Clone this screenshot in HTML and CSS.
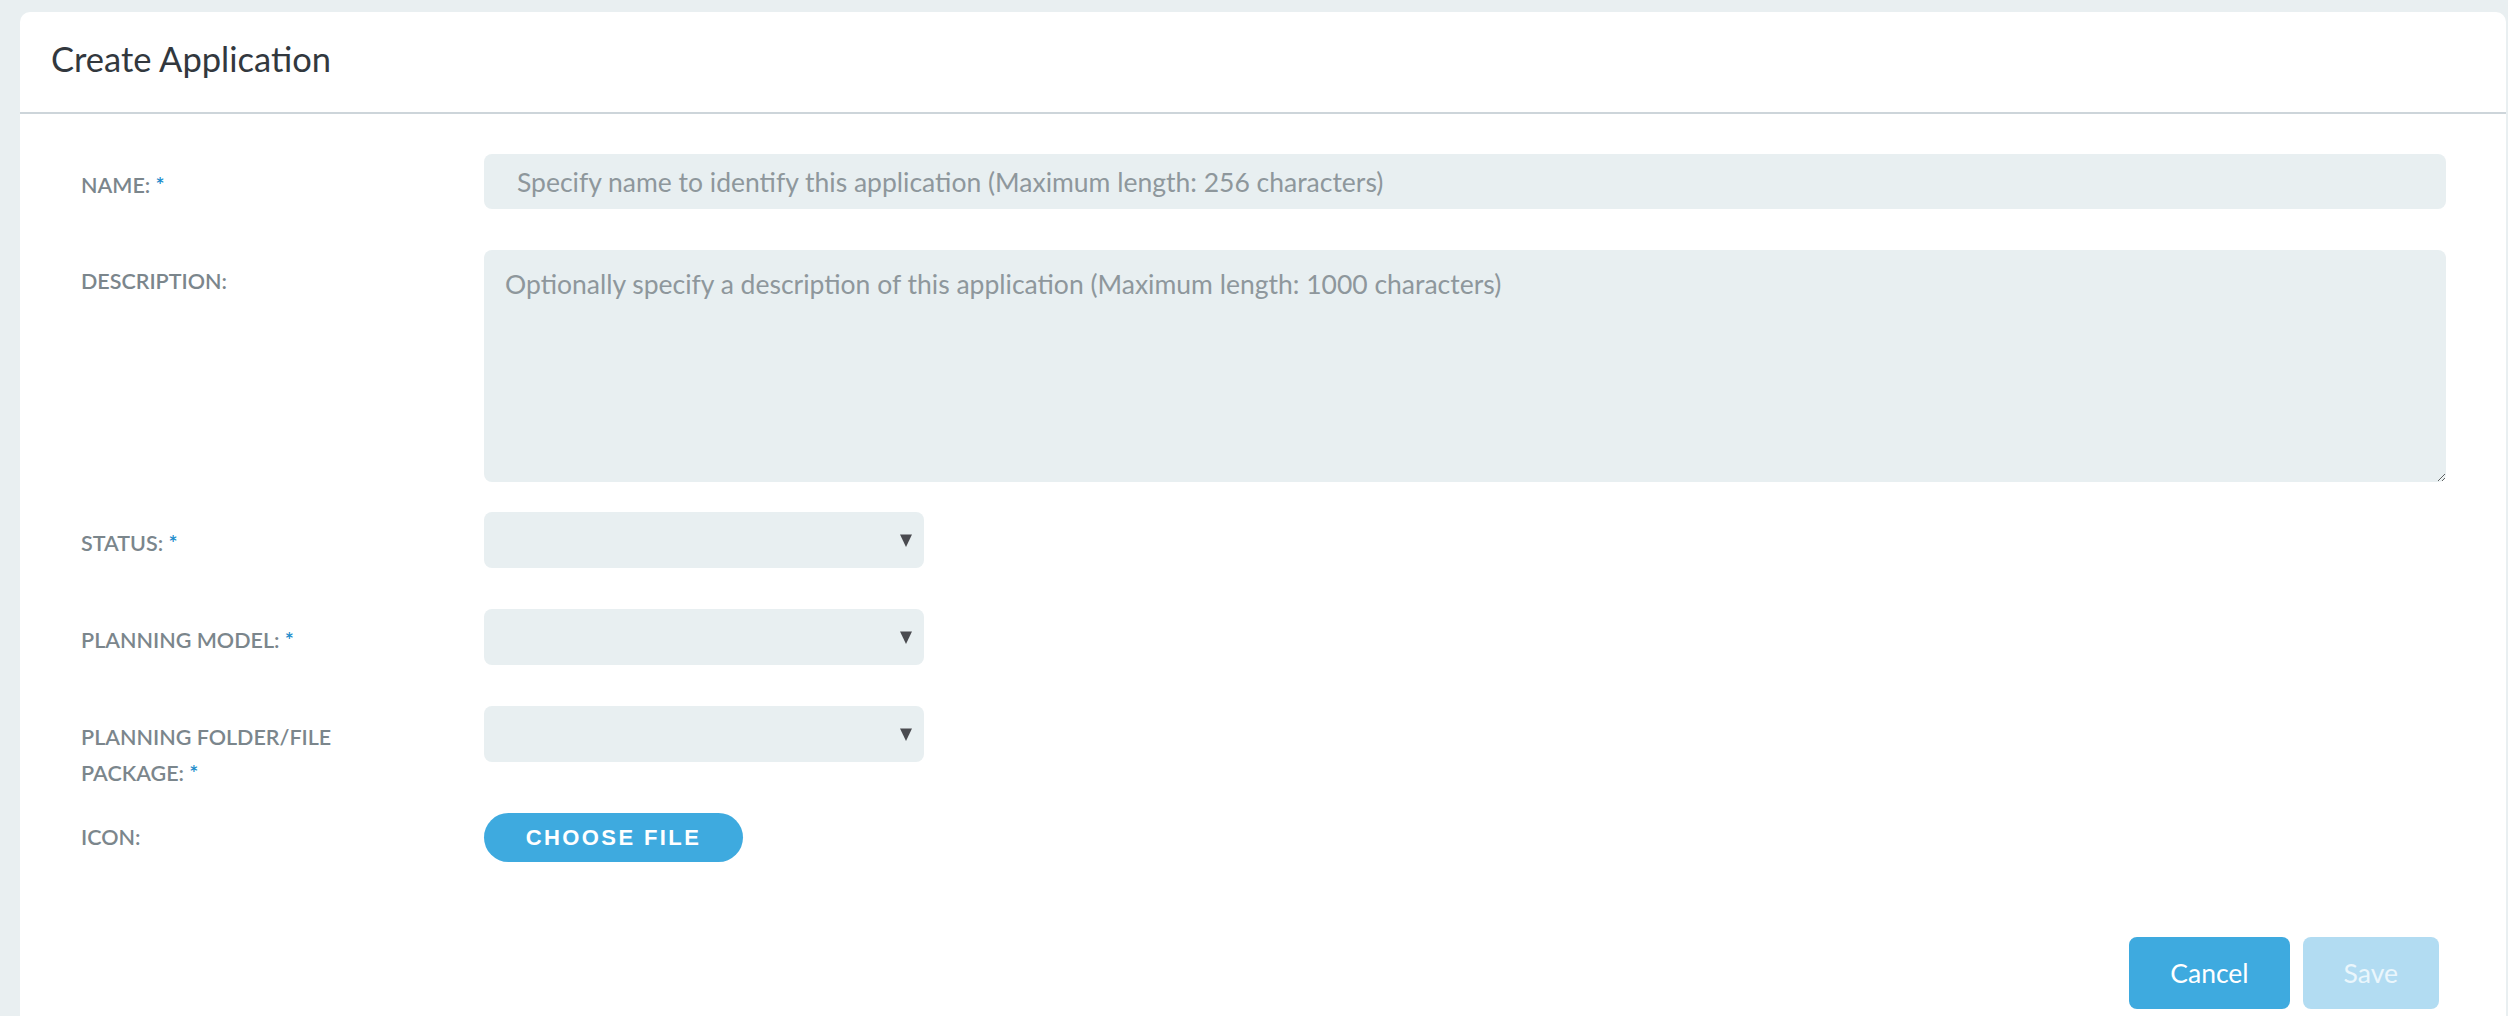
FILE: index.html
```html
<!DOCTYPE html>
<html lang="en">
<head>
<meta charset="utf-8">
<title>Create Application</title>
<link rel="stylesheet" href="styles.css">
</head>
<body>
<main class="page">
  <section class="card">
    <header class="card-header">
      <h1 class="card-title">Create Application</h1>
    </header>
    <form class="form">
      <div class="row row-name">
        <label class="label">NAME: <span class="req">*</span></label>
        <div class="field">
          <input class="input" type="text" placeholder="Specify name to identify this application (Maximum length: 256 characters)">
        </div>
      </div>
      <div class="row row-desc">
        <label class="label">DESCRIPTION:</label>
        <div class="field">
          <textarea class="textarea" placeholder="Optionally specify a description of this application (Maximum length: 1000 characters)"></textarea>
        </div>
      </div>
      <div class="row">
        <label class="label">STATUS: <span class="req">*</span></label>
        <div class="field">
          <div class="select-wrap">
            <select class="select"><option></option></select>
            <svg class="caret" width="12" height="13" viewBox="0 0 12 13"><polygon points="0,0.5 12,0.5 6,13" fill="#4a4b50"/></svg>
          </div>
        </div>
      </div>
      <div class="row">
        <label class="label">PLANNING MODEL: <span class="req">*</span></label>
        <div class="field">
          <div class="select-wrap">
            <select class="select"><option></option></select>
            <svg class="caret" width="12" height="13" viewBox="0 0 12 13"><polygon points="0,0.5 12,0.5 6,13" fill="#4a4b50"/></svg>
          </div>
        </div>
      </div>
      <div class="row row-folder">
        <label class="label">PLANNING FOLDER/FILE<br>PACKAGE: <span class="req">*</span></label>
        <div class="field">
          <div class="select-wrap">
            <select class="select"><option></option></select>
            <svg class="caret" width="12" height="13" viewBox="0 0 12 13"><polygon points="0,0.5 12,0.5 6,13" fill="#4a4b50"/></svg>
          </div>
        </div>
      </div>
      <div class="row row-icon">
        <label class="label">ICON:</label>
        <div class="field">
          <button type="button" class="btn-file">CHOOSE FILE</button>
        </div>
      </div>
      <div class="actions">
        <button type="button" class="btn btn-primary">Cancel</button>
        <button type="button" class="btn btn-disabled" disabled>Save</button>
      </div>
    </form>
  </section>
</main>
</body>
</html>
```

FILE: styles.css
```css
html, body {
  margin: 0;
  padding: 0;
}

body {
  background: #e9eff1;
  font-family: Lato, "Noto Sans", sans-serif;
  overflow: hidden;
}

.page {
  padding: 12px 2px 0 20px;
}

.card {
  background: #ffffff;
  border-radius: 10px 10px 0 0;
  min-height: 1100px;
}

.card-header {
  height: 100px;
  display: flex;
  align-items: center;
  padding-left: 31px;
  border-bottom: 2px solid #cdd5da;
}

.card-title {
  margin: 0 0 5px 0;
  font-size: 34.5px;
  font-weight: 400;
  color: #32383e;
  line-height: 1;
}

.form {
  padding: 40px 60px 0 61px;
}

.row {
  display: grid;
  grid-template-columns: 403px 1fr;
  align-items: start;
  margin-bottom: 41px;
}

.row-desc {
  margin-bottom: 30px;
}

.row-folder {
  margin-bottom: 20px;
}

.label {
  font-size: 21.5px;
  font-weight: 600;
  color: #7b868c;
  line-height: 36px;
  padding-top: 13px;
  padding-right: 90px;
}

.row-icon .label {
  padding-top: 8px;
}

.req {
  color: #1b8ccb;
}

.field {
  display: flex;
  align-items: flex-start;
}

.row-icon .field {
  padding-top: 2px;
}

.input,
.textarea,
.select {
  width: 100%;
  box-sizing: border-box;
  border: none;
  outline: none;
  background: #e8eff1;
  border-radius: 8px;
  font-family: Lato, "Noto Sans", sans-serif;
  font-size: 26.5px;
  color: #50585d;
}

.input {
  height: 55px;
  padding: 0 33px;
}

.textarea {
  display: block;
  height: 232px;
  padding: 16px 21px;
  line-height: 1.4;
  resize: vertical;
}

.input::placeholder,
.textarea::placeholder {
  color: #8e979c;
  opacity: 1;
}

.select-wrap {
  display: grid;
  width: 440px;
  height: 56px;
}

.select {
  grid-area: 1 / 1;
  height: 56px;
  padding: 0 20px;
  appearance: none;
  -webkit-appearance: none;
}

.caret {
  grid-area: 1 / 1;
  justify-self: end;
  align-self: center;
  margin-right: 12px;
  pointer-events: none;
}

.btn-file {
  width: 259px;
  height: 49px;
  border: none;
  border-radius: 25px;
  background: #3eaadf;
  color: #ffffff;
  font-family: "Liberation Sans", Arial, sans-serif;
  font-weight: 700;
  font-size: 22px;
  letter-spacing: 2.4px;
  padding: 0;
  cursor: pointer;
}

.actions {
  display: flex;
  justify-content: flex-end;
  gap: 13px;
  margin-top: 75px;
  margin-right: 7px;
}

.btn {
  height: 72px;
  padding: 0 41px;
  border: none;
  border-radius: 8px;
  font-family: Lato, "Noto Sans", sans-serif;
  font-size: 26.5px;
  font-weight: 400;
  cursor: pointer;
}

.btn-primary {
  background: #3eaadf;
  color: #ffffff;
}

.btn-disabled {
  background: #b2dcf2;
  color: #eaf6fc;
  cursor: default;
}
```
